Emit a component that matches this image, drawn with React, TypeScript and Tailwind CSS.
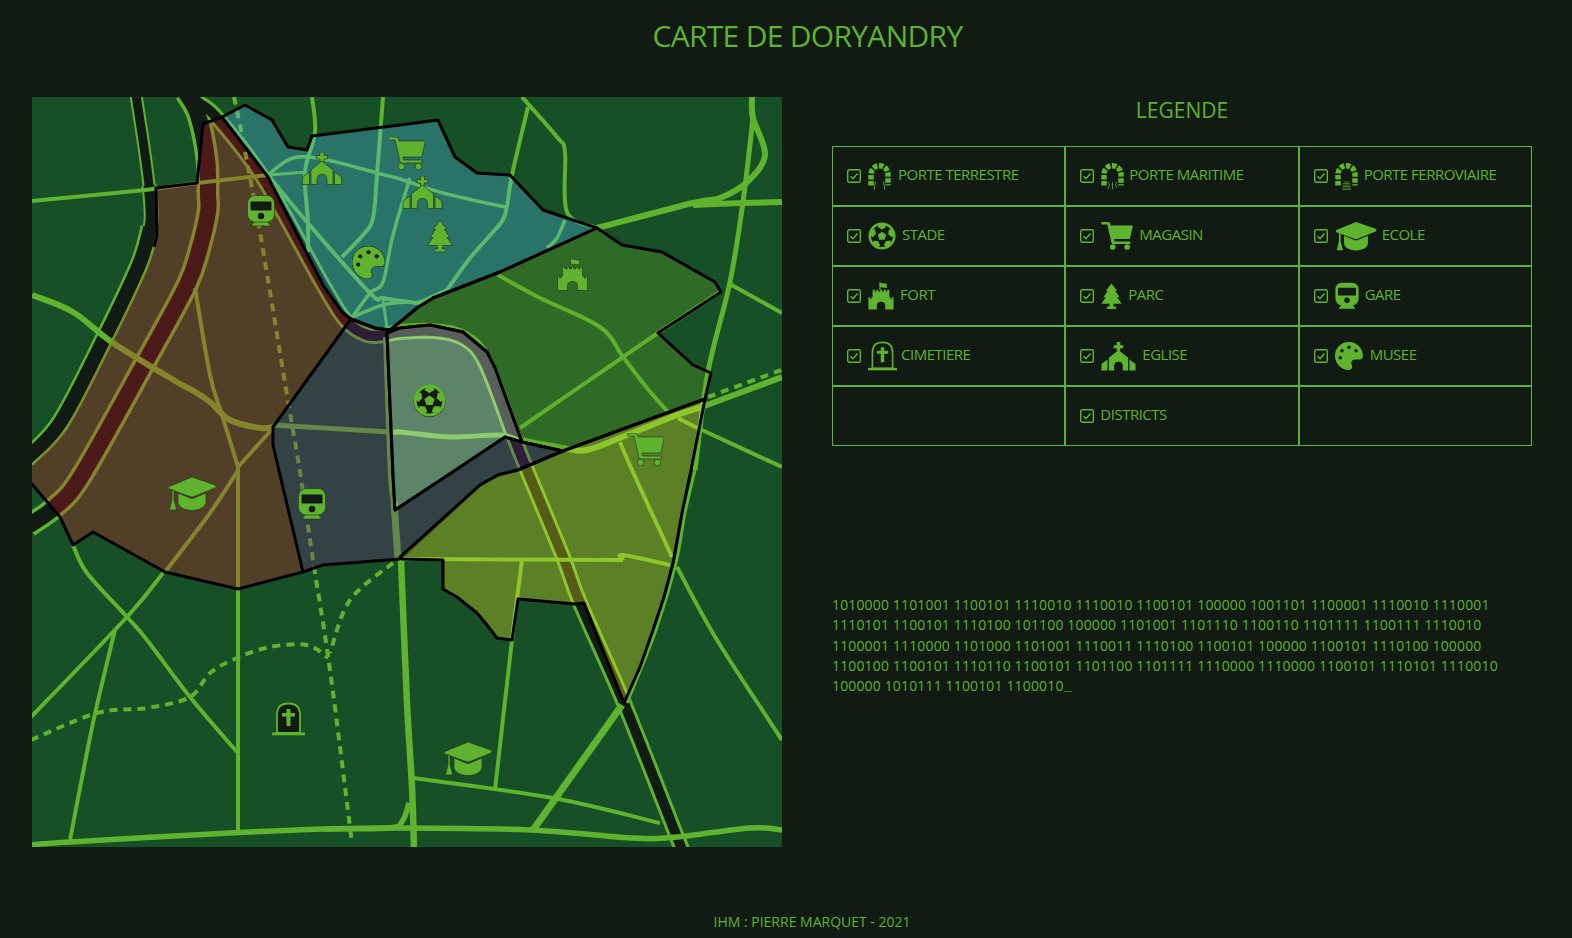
import type { ReactNode, SVGProps } from "react";
import { FaFutbol } from "react-icons/fa";

type Pt = [number, number];
type IconProps = SVGProps<SVGSVGElement>;

const INK = "#111b14";
const ROAD = "#5fb32e";

// smooth line through points (catmull-rom)
function curve(pts: Pt[]) {
  let d = `M${pts[0][0]},${pts[0][1]}`;
  for (let i = 0; i < pts.length - 1; i++) {
    const a = pts[Math.max(i - 1, 0)];
    const b = pts[i];
    const c = pts[i + 1];
    const e = pts[Math.min(i + 2, pts.length - 1)];
    d += ` C${b[0] + (c[0] - a[0]) / 6},${b[1] + (c[1] - a[1]) / 6} ${c[0] - (e[0] - b[0]) / 6},${c[1] - (e[1] - b[1]) / 6} ${c[0]},${c[1]}`;
  }
  return d;
}

const poly = (pts: Pt[]) => pts.map((p) => p.join(",")).join(" ");

const RAILS: { pts: Pt[]; outer: number; inner: number }[] = [
  { pts: [[104, -2], [112, 50], [117, 88], [119, 111]], outer: 13, inner: 9 },
  { pts: [[117, 88], [119, 111], [118, 131], [107, 168]], outer: 15, inner: 11 },
  { pts: [[118, 131], [107, 168], [71, 244], [28, 326], [-6, 362]], outer: 19, inner: 14 },
  { pts: [[154, -4], [166, 18], [175, 62], [176, 98], [176, 115], [168, 150], [155, 188], [115, 262], [50, 378], [23, 410], [-4, 429]], outer: 23, inner: 16 },
  { pts: [[150, -10], [166, 5], [185, 21], [231, 81], [291, 188], [315, 225], [335, 238], [351, 238], [368, 235], [401, 234], [431, 241], [453, 265], [481, 338], [495, 373], [531, 460], [548, 506], [592, 606], [645, 740], [652, 756]], outer: 16, inner: 10 },
];

const ROADS: { pts: Pt[]; w: number }[] = [
  { pts: [[0, 104], [113, 93], [165, 86], [236, 78]], w: 4 },
  { pts: [[236, 78], [261, 61], [295, 63], [345, 76], [368, 82], [411, 96], [473, 110]], w: 3.5 },
  { pts: [[236, 78], [275, 75]], w: 3 },
  { pts: [[280, 0], [283, 35], [273, 75], [276, 125], [276, 155]], w: 4 },
  { pts: [[351, 0], [345, 78], [341, 121], [331, 138], [310, 160]], w: 4 },
  { pts: [[236, 78], [275, 125], [338, 196], [351, 201], [378, 205], [388, 205], [415, 193]], w: 4 },
  { pts: [[378, 81], [361, 138], [351, 185], [338, 196], [320, 221]], w: 3.5 },
  { pts: [[321, 220], [351, 208], [378, 205]], w: 3.5 },
  { pts: [[351, 203], [355, 231]], w: 3 },
  { pts: [[496, 10], [480, 78], [473, 118], [461, 135], [438, 161], [415, 193]], w: 4 },
  { pts: [[490, 0], [525, 40], [533, 55], [535, 115], [565, 131]], w: 4 },
  { pts: [[533, 123], [525, 141], [515, 151]], w: 3.5 },
  { pts: [[0, 198], [41, 215], [81, 246], [145, 285], [160, 293], [178, 305], [198, 323], [228, 331], [241, 330]], w: 6 },
  { pts: [[241, 328], [358, 335], [368, 335], [418, 340], [468, 338], [488, 344]], w: 5 },
  { pts: [[488, 343], [531, 351], [555, 353], [595, 338], [645, 318], [675, 308], [750, 280]], w: 6 },
  { pts: [[720, 0], [721, 21], [733, 58], [715, 85], [688, 101], [661, 106], [565, 131]], w: 6 },
  { pts: [[750, 105], [711, 106], [661, 108]], w: 6 },
  { pts: [[721, 21], [711, 105], [698, 185], [676, 275], [663, 373]], w: 5 },
  { pts: [[663, 373], [653, 416], [644, 466], [624, 533], [595, 606]], w: 3 },
  { pts: [[696, 186], [750, 216]], w: 4 },
  { pts: [[646, 321], [670, 333], [750, 370]], w: 4 },
  { pts: [[488, 331], [591, 260], [626, 236], [688, 195]], w: 4 },
  { pts: [[466, 178], [508, 201], [568, 230], [591, 260], [615, 291], [636, 315]], w: 4 },
  { pts: [[588, 345], [600, 373], [640, 460]], w: 4 },
  { pts: [[645, 470], [685, 543], [750, 643]], w: 4 },
  { pts: [[370, 462], [591, 463]], w: 4 },
  { pts: [[591, 463], [591, 458], [638, 468]], w: 4 },
  { pts: [[490, 463], [480, 543], [463, 693]], w: 4 },
  { pts: [[353, 240], [358, 378], [362, 410]], w: 4 },
  { pts: [[362, 405], [366, 463]], w: 7 },
  { pts: [[369, 463], [375, 606], [380, 690], [382, 752]], w: 6.5 },
  { pts: [[-2, 748], [38, 745], [198, 736], [291, 732], [358, 731], [371, 723], [377, 706]], w: 5.5 },
  { pts: [[291, 732], [358, 731], [498, 733], [601, 741], [645, 740], [718, 731], [750, 733]], w: 5.5 },
  { pts: [[381, 681], [521, 701], [628, 726]], w: 4 },
  { pts: [[590, 608], [501, 733]], w: 7 },
  { pts: [[41, 448], [55, 476], [95, 520], [115, 543], [158, 600], [205, 655]], w: 4 },
  { pts: [[131, 476], [95, 520], [-2, 621]], w: 4 },
  { pts: [[83, 533], [61, 626], [38, 743]], w: 4 },
  { pts: [[206, 370], [206, 736]], w: 4 },
  { pts: [[206, 370], [190, 318], [178, 278], [163, 191]], w: 4 },
  { pts: [[205, 375], [178, 416], [133, 475]], w: 4 },
  { pts: [[241, 331], [206, 370]], w: 4 },
];

const DASHED: Pt[][] = [
  [[202, 0], [208, 28], [215, 65], [228, 135], [255, 298], [268, 375], [281, 463], [298, 573], [320, 746]],
  [[361, 466], [318, 503], [298, 556]],
  [[-1, 643], [65, 616], [115, 611], [158, 600], [178, 576], [205, 561], [238, 550], [275, 548], [296, 561]],
  [[676, 300], [752, 272]],
];

const BROWN: Pt[] = [[171, 27], [190, 20], [236, 80], [291, 188], [310, 215], [319, 222], [241, 330], [241, 348], [248, 378], [271, 475], [206, 492], [133, 475], [61, 435], [41, 448], [28, 420], [-1, 386], [-1, 370], [35, 331], [78, 248], [115, 171], [125, 138], [124, 91], [165, 86]];
const TEAL: Pt[] = [[190, 20], [213, 8], [240, 23], [256, 50], [275, 53], [280, 39], [368, 28], [406, 23], [423, 60], [445, 76], [478, 78], [511, 113], [565, 131], [468, 175], [401, 201], [385, 211], [368, 225], [358, 233], [343, 231], [319, 222], [310, 215], [291, 188], [236, 80]];
const GREEN: Pt[] = [[565, 131], [590, 148], [630, 155], [683, 185], [689, 195], [626, 236], [661, 268], [679, 276], [673, 302], [531, 354], [490, 345], [463, 271], [455, 255], [431, 235], [398, 228], [368, 231], [358, 233], [368, 225], [385, 211], [401, 201], [468, 175]];
const OLIVE: Pt[] = [[673, 302], [531, 354], [486, 373], [466, 378], [448, 388], [368, 460], [370, 462], [411, 463], [411, 492], [425, 500], [445, 516], [455, 528], [465, 541], [480, 543], [486, 502], [543, 507], [552, 506], [592, 606], [608, 570], [621, 533], [632, 500], [641, 466], [650, 416], [659, 373]];
const SLATE: Pt[] = [[319, 222], [343, 231], [358, 233], [355, 236], [361, 378], [363, 413], [416, 378], [473, 340], [490, 345], [531, 354], [486, 373], [466, 378], [448, 388], [368, 462], [291, 468], [271, 475], [248, 378], [241, 348], [241, 330]];
const STADIUM: Pt[] = [[355, 236], [361, 378], [363, 413], [416, 378], [473, 340], [490, 345], [463, 271], [455, 255], [431, 235], [398, 228], [368, 231]];

const BROWN_EDGES: Pt[][] = [
  [[122, 150], [125, 138], [124, 91], [165, 86], [171, 27], [190, 20]],
  [[271, 475], [206, 492], [133, 475], [61, 435], [41, 448], [28, 420], [-1, 386]],
];

const ZONES: { pts: Pt[]; fill: string }[] = [
  { pts: TEAL, fill: "rgba(83,199,255,.3)" },
  { pts: GREEN, fill: "rgba(103,170,40,.3)" },
  { pts: SLATE, fill: "rgba(117,36,140,.3)" },
  { pts: STADIUM, fill: "rgba(255,255,255,.3)" },
  { pts: OLIVE, fill: "rgba(253,243,37,.3)" },
];

function CartIcon(props: IconProps) {
  return (
    <svg viewBox="0 0 37 33" fill="currentColor" {...props}>
      <path d="M1 0H8Q10 0 10.500 2L11 4H36Q37.200 4 37 5.500L34 19Q33.700 20 32.500 20H15L15.800 23H33Q34.500 23 34.500 24.500T33 26H14Q12.500 26 12 24.500L7 3H1Q0 3 0 1.500T1 0Z" />
      <circle cx="13.500" cy="29.500" r="3.300" />
      <circle cx="30.500" cy="29.500" r="3.300" />
    </svg>
  );
}

function CapIcon(props: IconProps) {
  return (
    <svg viewBox="0 0 48 34" fill="currentColor" {...props}>
      <path d="M24 0L47 8Q49 9.500 47 11L26 19.500Q24 20.300 22 19.500L1 12Q-0.500 10.500 1 9.500Z" />
      <path d="M10 16L22 21Q24 22 26 21L38 16V25C38 30 31 33.500 24 33.500C17 33.500 10 30 10 25Z" />
      <path d="M4 12.500L6 13.500V22.500L8.500 32Q8.700 33 7.700 33H2.500Q1.500 33 1.700 32L4 22.500Z" />
    </svg>
  );
}

function TrainIcon(props: IconProps) {
  return (
    <svg viewBox="0 0 28 32" fill="currentColor" {...props}>
      <path d="M8 26L4 31H24L20 26Z" />
      <rect x="0.500" y="0.500" width="27" height="26.500" rx="7.500" />
      <rect x="3.500" y="6.500" width="21" height="9" rx="1" fill={INK} stroke="none" />
      <circle cx="14" cy="21" r="3.200" fill={INK} stroke="none" />
    </svg>
  );
}

function ChurchIcon(props: IconProps) {
  return (
    <svg viewBox="0 0 40 33" fill="currentColor" {...props}>
      <path d="M18 0H22V3.500H25.500V7H22V10H18V7H14.500V3.500H18Z" />
      <path d="M20 9L31 18V32.500H25V27.500Q25 22.500 20 22.500Q15 22.500 15 27.500V32.500H9V18Z" />
      <path d="M0.500 32.500V26Q0.500 25 1.500 24.200L7.500 20V32.500Z" />
      <path d="M39.500 32.500V26Q39.500 25 38.500 24.200L32.500 20V32.500Z" />
    </svg>
  );
}

function TreeIcon(props: IconProps) {
  return (
    <svg viewBox="0 0 26 33" fill="currentColor" {...props}>
      <path d="M13 0.500L20 9.500H17.500L23 17.500H20L25.500 25.500H15.500V29H17.500Q19 29 19 30.500T17.500 32H8.500Q7 32 7 30.500T8.500 29H10.500V25.500H0.500L6 17.500H3L8.500 9.500H6Z" />
    </svg>
  );
}

function PaletteIcon(props: IconProps) {
  return (
    <svg viewBox="0 0 512 512" fill="currentColor" {...props}>
      <path d="M204 5C105 24 25 104 5 203C-32 390 137 530 264 510C305 504 325 456 306 418C283 373 316 320 367 320H447C483 320 512 290 512 255C511 97 368-27 204 5Z" />
      <g fill={INK} stroke="none">
        <circle cx="96" cy="288" r="32" />
        <circle cx="128" cy="160" r="32" />
        <circle cx="256" cy="96" r="32" />
        <circle cx="384" cy="160" r="32" />
      </g>
    </svg>
  );
}

function FortIcon(props: IconProps) {
  return (
    <svg viewBox="0 0 31 33" fill="currentColor" {...props}>
      <path d="M13.500 0H15V1L22.500 2V7L15 6V9H13.500Z" />
      <path d="M0.500 32.500V18H2.500V20H4V18H5.500V9H8V11H10V9H12.500V11H14.500V9H17V11H19V9H21.500V11H23V9H25.500V18H27V20H28.500V18H30.500V32.500H20.500V28Q20.500 23.500 15.500 23.500Q10.500 23.500 10.500 28V32.500Z" />
    </svg>
  );
}

function TombIcon(props: IconProps) {
  return (
    <svg viewBox="0 0 33 34" fill="currentColor" {...props}>
      <path d="M5 31V13Q5 1.500 16.500 1.500Q28 1.500 28 13V31Z" fill={INK} stroke="currentColor" strokeWidth="1.800" />
      <path d="M14.500 7H18.500V11H23V14.500H18.500V24H14.500V14.500H10V11H14.500Z" stroke="none" />
      <rect x="0" y="30.500" width="33" height="2.800" stroke="none" />
    </svg>
  );
}

function PorteIcon({ kind, ...props }: IconProps & { kind: "terre" | "mer" | "fer" }) {
  return (
    <svg viewBox="0 0 23 27" fill="none" stroke="currentColor" {...props}>
      <path d="M3 22.500V11.200A8.500 8.500 0 0 1 20 11.200V22.500" strokeWidth="5.500" strokeDasharray="4.500 1.500" />
      {kind === "terre" && <path d="M7.500 18.500L6 27M15.500 18.500L17 27" strokeWidth="0.900" />}
      {kind === "mer" && <path d="M7 19L8.500 21.500L7 26M11.500 19V26.500M16 19L14.500 21.500L16 25" strokeWidth="0.800" />}
      {kind === "fer" && <path d="M8.500 19H14.500M8 20.500H15M7.500 22H15.500M7.500 23.500H15.500M7 25H16M7 26.500H16" strokeWidth="0.600" />}
    </svg>
  );
}

function CheckBox() {
  return (
    <svg viewBox="0 0 14 14" className="h-[14px] w-[14px] shrink-0" fill="none" stroke="currentColor">
      <rect x="0.700" y="0.700" width="12.600" height="12.600" rx="1.500" strokeWidth="1.400" />
      <path d="M3.500 7.200L6 9.700L10.500 4.500" strokeWidth="1.500" />
    </svg>
  );
}

function Cell({ icon, label }: { icon?: ReactNode; label?: string }) {
  return (
    <div className="flex items-center border border-[#5fb32e] pl-[14px]">
      {label && (
        <>
          <CheckBox />
          <div className="ml-[6px] shrink-0">{icon}</div>
          <span className="mb-1 whitespace-nowrap">{label}</span>
        </>
      )}
    </div>
  );
}

function DoryMap() {
  const mark = { className: "text-[#5fb32e]", stroke: "#1c2e1d", strokeWidth: 0.6 };
  return (
    <svg viewBox="0 0 750 750" className="h-[750px] w-[750px] shrink-0 bg-[#174f27]">
      <g fill="none" stroke={ROAD}>
        {RAILS.map((r, i) => (
          <path key={i} d={curve(r.pts)} strokeWidth={r.outer} />
        ))}
        {RAILS.map((r, i) => (
          <path key={i} d={curve(r.pts)} strokeWidth={r.inner} stroke={INK} />
        ))}
        {ROADS.map((r, i) => (
          <path key={i} d={curve(r.pts)} strokeWidth={r.w} />
        ))}
        {DASHED.map((pts, i) => (
          <path key={i} d={curve(pts)} strokeWidth={4} strokeDasharray="8 6" />
        ))}
      </g>
      <polygon points={poly(BROWN)} fill="rgba(217,25,43,.3)" />
      {BROWN_EDGES.map((pts, i) => (
        <polyline key={i} points={poly(pts)} fill="none" stroke="#000" strokeWidth={3} strokeLinejoin="round" />
      ))}
      {ZONES.map((z, i) => (
        <polygon key={i} points={poly(z.pts)} fill={z.fill} stroke="#000" strokeWidth={3} strokeLinejoin="round" />
      ))}
      <TrainIcon x={215} y={98} width={28} height={32} {...mark} />
      <TrainIcon x={266} y={391} width={28} height={32} {...mark} />
      <ChurchIcon x={270} y={55} width={40} height={33} {...mark} />
      <ChurchIcon x={370} y={79} width={41} height={33} {...mark} />
      <CartIcon x={356} y={40} width={37} height={33} {...mark} />
      <CartIcon x={595} y={336} width={37} height={33} {...mark} />
      <TreeIcon x={395} y={123} width={26} height={33} {...mark} />
      <PaletteIcon x={320} y={149} width={33} height={33} {...mark} strokeWidth={12} />
      <FortIcon x={525} y={161} width={31} height={33} {...mark} />
      <circle cx={397.500} cy={304} r={16} fill={INK} />
      <FaFutbol x={381} y={287} size={33} color={ROAD} />
      <CapIcon x={136} y={380} width={48} height={34} {...mark} />
      <CapIcon x={412} y={645} width={48} height={34} {...mark} />
      <TombIcon x={240} y={605} width={33} height={34} className="text-[#5fb32e]" />
    </svg>
  );
}

export default function App() {
  return (
    <div className="h-[938px] overflow-hidden bg-[#111b14] font-['Open_Sans',sans-serif] text-[#5fb32e]">
      <h1 className="flex h-[97px] items-start justify-center pl-[43px] pt-[14px] text-[30px] leading-[44px] tracking-[-0.7px]">
        CARTE DE DORYANDRY
      </h1>
      <main className="flex gap-[50px] pl-[32px]">
        <DoryMap />
        <div className="w-[700px]">
          <h2 className="pb-[23px] text-center text-[21px] leading-[26px]">LEGENDE</h2>
          <div className="grid h-[300px] grid-cols-3 grid-rows-5 text-[15px] font-medium tracking-[-0.5px]">
            <Cell label="PORTE TERRESTRE" icon={<PorteIcon kind="terre" width={23} height={27} className="ml-px mr-[7px]" />} />
            <Cell label="PORTE MARITIME" icon={<PorteIcon kind="mer" width={23} height={27} className="ml-px mr-[5px]" />} />
            <Cell label="PORTE FERROVIAIRE" icon={<PorteIcon kind="fer" width={23} height={27} className="ml-px mr-[6px]" />} />
            <Cell label="STADE" icon={<FaFutbol size={28} className="ml-px mr-[6px]" />} />
            <Cell label="MAGASIN" icon={<CartIcon width={32} height={28} className="ml-px mr-[6px]" />} />
            <Cell label="ECOLE" icon={<CapIcon width={42} height={29} className="ml-px mr-[5px]" />} />
            <Cell label="FORT" icon={<FortIcon width={26} height={28} className="ml-px mr-[6px]" />} />
            <Cell label="PARC" icon={<TreeIcon width={21} height={27} className="ml-px mr-[6px]" />} />
            <Cell label="GARE" icon={<TrainIcon width={24} height={28} className="ml-px mr-[6px]" />} />
            <Cell label="CIMETIERE" icon={<TombIcon width={29} height={30} className="ml-px mr-[4px]" />} />
            <Cell label="EGLISE" icon={<ChurchIcon width={35} height={29} className="ml-px mr-[6px]" />} />
            <Cell label="MUSEE" icon={<PaletteIcon width={28} height={28} className="ml-px mr-[7px]" />} />
            <Cell />
            <Cell label="DISTRICTS" />
            <Cell />
          </div>
          <p className="mt-[149px] text-[14px] font-medium leading-[20.25px] tracking-[0.15px]">
            1010000 1101001 1100101 1110010 1110010 1100101 100000 1001101 1100001 1110010 1110001
            <br />
            1110101 1100101 1110100 101100 100000 1101001 1101110 1100110 1101111 1100111 1110010
            <br />
            1100001 1110000 1101000 1101001 1110011 1110100 1100101 100000 1100101 1110100 100000
            <br />
            1100100 1100101 1110110 1100101 1101100 1101111 1110000 1110000 1100101 1110101 1110010
            <br />
            100000 1010111 1100101 1100010
            <span className="inline-block h-px w-[8px] translate-y-px bg-[#5fb32e] opacity-60" />
          </p>
        </div>
      </main>
      <footer className="pl-[52px] pt-[65px] text-center text-[14px] font-medium leading-[20px]">IHM : PIERRE MARQUET - 2021</footer>
    </div>
  );
}
